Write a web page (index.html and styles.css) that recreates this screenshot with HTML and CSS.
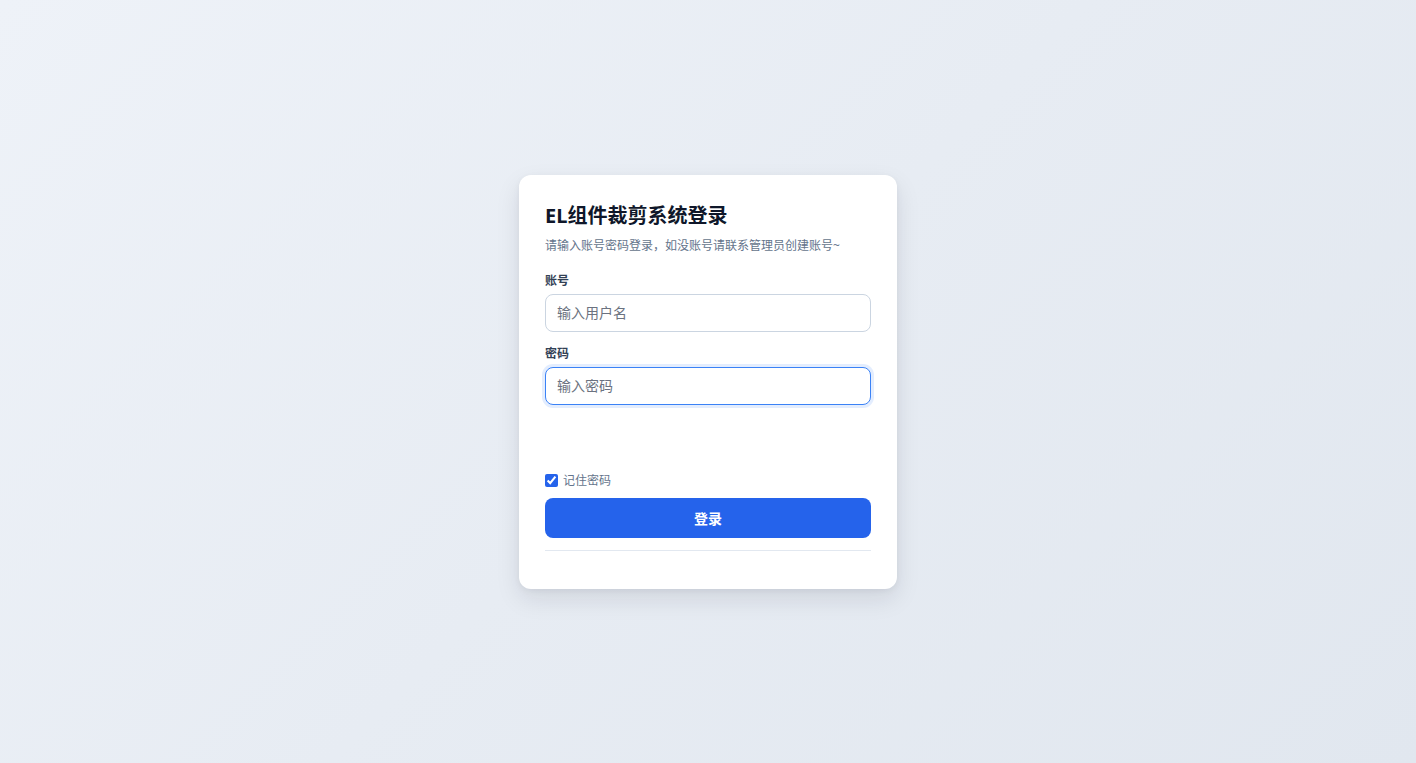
FILE: index.html
```html
<!DOCTYPE html>
<html lang="zh-CN">
<head>
<meta charset="utf-8">
<title>EL组件裁剪系统登录</title>
<link rel="stylesheet" href="styles.css">
</head>
<body>
<main class="page">
  <section class="card">
    <h1 class="title">EL组件裁剪系统登录</h1>
    <p class="subtitle">请输入账号密码登录，如没账号请联系管理员创建账号~</p>
    <div class="field">
      <label class="label" for="u">账号</label>
      <input class="input" id="u" type="text" placeholder="输入用户名">
    </div>
    <div class="field field-second">
      <label class="label" for="p">密码</label>
      <input class="input is-focused" id="p" type="password" placeholder="输入密码">
    </div>
    <label class="remember">
      <input class="check" type="checkbox" checked>
      <span>记住密码</span>
    </label>
    <button class="btn" type="button">登录</button>
    <div class="divider"></div>
  </section>
</main>
</body>
</html>
```

FILE: styles.css
```css
* { box-sizing: border-box; }
html, body { margin: 0; height: 100%; }
body {
  font-family: "Noto Sans", "Noto Sans CJK SC", sans-serif;
  background: linear-gradient(135deg, #eef2f8 0%, #e7ecf3 50%, #e1e7ef 100%);
}
.page {
  min-height: 100vh;
  display: flex;
  align-items: center;
  justify-content: center;
}
.card {
  width: 378px;
  background: #ffffff;
  border-radius: 12px;
  padding: 26px 26px 38px;
  box-shadow: 0 10px 25px rgba(15, 23, 42, 0.10), 0 2px 6px rgba(15, 23, 42, 0.05);
  display: flex;
  flex-direction: column;
}
.title {
  margin: 0;
  font-size: 20px;
  line-height: 30px;
  font-weight: 700;
  color: #0f172a;
}
.subtitle {
  margin: 6px 0 0;
  font-size: 12px;
  line-height: 18px;
  color: #64748b;
}
.field {
  display: flex;
  flex-direction: column;
  margin-top: 18px;
}
.field-second { margin-top: 14px; }
.label {
  font-size: 12px;
  line-height: 16px;
  font-weight: 600;
  color: #334155;
  margin-bottom: 5px;
}
.input {
  height: 38px;
  border: 1px solid #cbd5e1;
  border-radius: 8px;
  padding: 0 11px;
  font-family: inherit;
  font-size: 14px;
  color: #111827;
  outline: none;
  background: #fff;
}
.input::placeholder { color: #6b7280; }
.input.is-focused {
  border-color: #3b82f6;
  box-shadow: 0 0 0 3px rgba(59, 130, 246, 0.14);
}
.remember {
  margin-top: 67px;
  display: flex;
  align-items: center;
  gap: 5px;
  font-size: 12px;
  line-height: 18px;
  color: #64748b;
}
.check {
  margin: 0;
  width: 13px;
  height: 13px;
  accent-color: #2563eb;
}
.btn {
  margin-top: 8px;
  height: 40px;
  border: none;
  border-radius: 8px;
  background: #2563eb;
  color: #fff;
  font-family: inherit;
  font-size: 14px;
  font-weight: 700;
}
.divider {
  margin-top: 12px;
  height: 1px;
  background: #e2e8f0;
}
```
